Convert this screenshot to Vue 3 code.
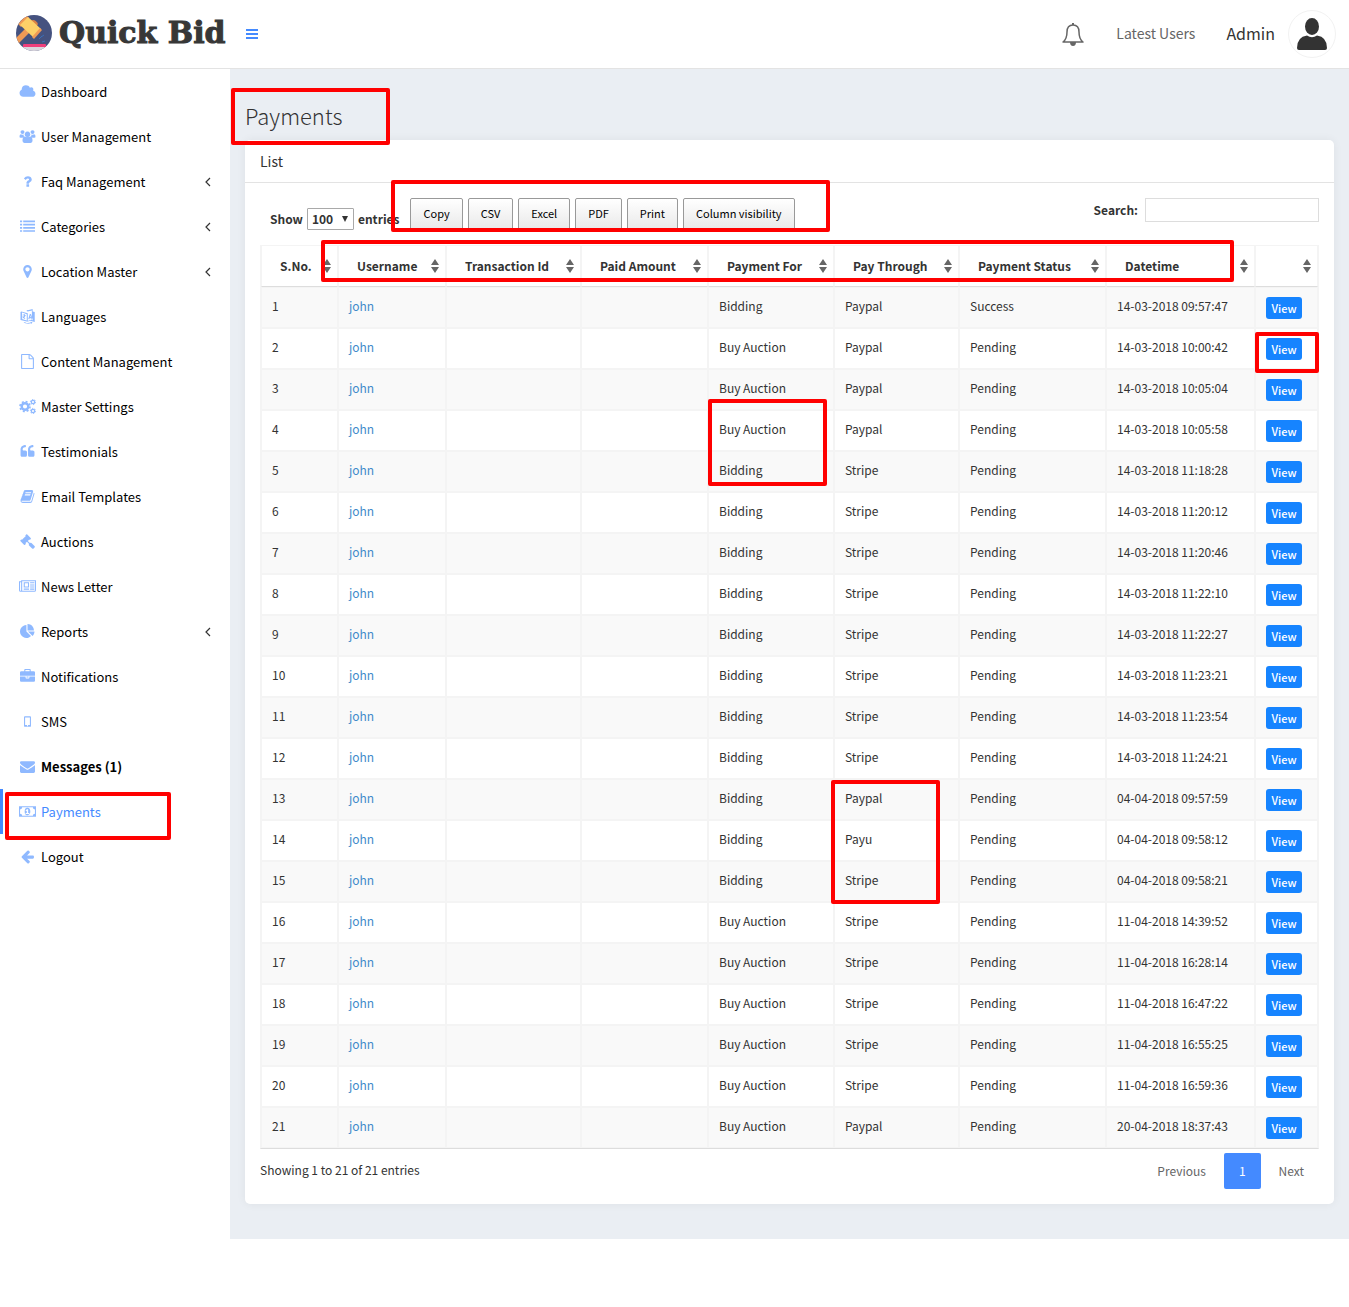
<script setup>
import { ref } from 'vue'

const menu = [
  { label: 'Dashboard', icon: 'cloud' },
  { label: 'User Management', icon: 'users' },
  { label: 'Faq Management', icon: 'question', sub: true },
  { label: 'Categories', icon: 'list', sub: true },
  { label: 'Location Master', icon: 'marker', sub: true },
  { label: 'Languages', icon: 'language' },
  { label: 'Content Management', icon: 'file' },
  { label: 'Master Settings', icon: 'cogs' },
  { label: 'Testimonials', icon: 'quote' },
  { label: 'Email Templates', icon: 'book' },
  { label: 'Auctions', icon: 'gavel' },
  { label: 'News Letter', icon: 'news' },
  { label: 'Reports', icon: 'pie', sub: true },
  { label: 'Notifications', icon: 'briefcase' },
  { label: 'SMS', icon: 'mobile' },
  { label: 'Messages (1)', icon: 'envelope', bold: true },
  { label: 'Payments', icon: 'money', active: true },
  { label: 'Logout', icon: 'arrow' },
]

const wide = ['cloud', 'users', 'cogs', 'news', 'money']

const icons = {
  cloud: 'M1984 1152q0 159-112.500 271.500t-271.500 112.500h-1088q-185 0-316.500-131.500t-131.500-316.500q0-132 71-241.500t187-163.500q-2-28-2-43 0-212 150-362t362-150q158 0 286.500 88t187.500 230q70-62 166-62 106 0 181 75t75 181q0 75-41 138 129 30 213 134.500t84 239.500z',
  question: 'M1088 1256v240q0 16-12 28t-28 12h-240q-16 0-28-12t-12-28v-240q0-16 12-28t28-12h240q16 0 28 12t12 28zm316-600q0 54-15.500 101t-35 76.500-55 59.500-57.500 43.500-61 35.500q-41 23-68.500 65t-27.500 67q0 17-12 32.500t-28 15.500h-240q-15 0-25.500-18.500t-10.500-37.500v-45q0-83 65-156.500t143-108.500q59-27 84-56t25-76q0-42-46.500-74t-107.500-32q-65 0-108 29-35 25-107 115-13 16-31 16-12 0-25-8l-164-125q-13-10-15.500-25t5.500-28q160-266 464-266 80 0 161 31t146 83 106 127.500 41 158.500z',
  list: 'M0 192h256v192H0zM384 192h1408v192H384zM0 576h256v192H0zM384 576h1408v192H384zM0 960h256v192H0zM384 960h1408v192H384zM0 1344h256v192H0zM384 1344h1408v192H384z',
  marker: 'M1152 640q0-106-75-181t-181-75-181 75-75 181 75 181 181 75 181-75 75-181zm256 0q0 109-33 179l-364 774q-16 33-47.500 52t-67.500 19-67.500-19-46.500-52l-365-774q-33-70-33-179 0-212 150-362t362-150 362 150 150 362z',
  file: 'M1596 380q28 28 48 76t20 88v1152q0 40-28 68t-68 28h-1344q-40 0-68-28t-28-68v-1600q0-40 28-68t68-28h896q40 0 88 20t76 48zm-444-244v376h376q-10-29-22-41l-313-313q-12-12-41-22zm384 1528v-1024h-416q-40 0-68-28t-28-68v-416h-768v1536h1280z',
  quote: 'M832 960v384q0 80-56 136t-136 56h-384q-80 0-136-56t-56-136v-704q0-104 40.500-198.500t109.500-163.500 163.500-109.500 198.500-40.500h64q26 0 45 19t19 45v128q0 26-19 45t-45 19h-64q-106 0-181 75t-75 181v32q0 40 28 68t68 28h224q80 0 136 56t56 136zm896 0v384q0 80-56 136t-136 56h-384q-80 0-136-56t-56-136v-704q0-104 40.500-198.500t109.500-163.500 163.500-109.500 198.500-40.500h64q26 0 45 19t19 45v128q0 26-19 45t-45 19h-64q-106 0-181 75t-75 181v32q0 40 28 68t68 28h224q80 0 136 56t56 136z',
  book: 'M1703 478q40 57 18 129l-275 906q-19 64-76.500 107.500t-122.500 43.500h-923q-77 0-148.500-53.500t-99.500-131.500q-24-67-2-127 0-4 3-27t4-37q1-8-3-21.500t-3-19.500q2-11 8-21t16.500-23.500 16.500-23.500q23-38 45-91.500t30-91.500q3-10 .5-30t-.5-28q3-11 17-28t17-23q21-36 42-92t25-90q1-9-2.500-32t.5-28q4-13 22-30.500t22-22.500q19-26 42.500-84.500t27.500-96.500q1-8-3-25.500t-2-26.500q2-8 9-18t18-23 17-21q8-12 16.500-30.500t15-35 16-36 19.500-32 26.500-23.500 36-11.500 47.500 5.500l-1 3q38-9 51-9h761q74 0 114 56t18 130l-274 906q-36 119-71.500 153.500t-128.500 34.500h-869q-27 0-38 15-11 16-1 43 24 70 144 70h923q29 0 56-15.500t35-41.500l300-987q7-22 5-57 38 15 59 43zm-1064 2q-4 13 2 22.500t20 9.500h608q13 0 25.500-9.500t16.500-22.500l21-64q4-13-2-22.500t-20-9.500h-608q-13 0-25.500 9.500t-16.500 22.500zm-83 256q-4 13 2 22.500t20 9.500h608q13 0 25.500-9.500t16.500-22.500l21-64q4-13-2-22.500t-20-9.500h-608q-13 0-25.500 9.500t-16.500 22.500z',
  gavel: 'M1771 1536q0 53-37 90l-107 108q-39 37-91 37-53 0-90-37l-363-364q-38-36-38-90 0-53 43-96l-256-256-126 126q-14 14-34 14t-34-14q2 2 12.500 12t12.500 13 10 11.500 10 13.500 6 13.500 5.500 16.500 1.500 18q0 38-28 68-3 3-16.500 18t-19 20.500-18.500 16.500-22 15.500-22 9-26 4.500q-40 0-68-28l-408-408q-28-28-28-68 0-13 4.500-26t9-22 15.500-22 16.500-18.500 20.500-19 18-16.500q30-28 68-28 10 0 18 1.500t16.500 5.500 13.500 6 13.500 10 11.500 10 13 12.500 12 12.500q-14-14-14-34t14-34l348-348q14-14 34-14t34 14q-2-2-12.500-12t-12.500-13-10-11.500-10-13.500-6-13.500-5.500-16.500-1.500-18q0-38 28-68 3-3 16.500-18t19-20.500 18.500-16.500 22-15.500 22-9 26-4.500q40 0 68 28l408 408q28 28 28 68 0 13-4.500 26t-9 22-15.500 22-16.500 18.500-20.500 19-18 16.500q-30 28-68 28-10 0-18-1.500t-16.500-5.500-13.500-6-13.500-10-11.500-10-13-12.500-12-12.500q14 14 14 34t-14 34l-126 126 256 256q43-43 96-43 52 0 91 37l363 363q37 39 37 91z',
  pie: 'M768 890l546 546q-106 108-247.500 168t-298.500 60q-209 0-385.500-103t-279.500-279.500-103-385.500 103-385.500 279.500-279.500 385.500-103v762zm187 6h773q0 157-60 298.500t-168 247.500zm709-128h-768v-768q209 0 385.500 103t279.500 279.500 103 385.500z',
  briefcase: 'M640 256h512v-128h-512v128zm1152 640v480q0 66-47 113t-113 47h-1472q-66 0-113-47t-47-113v-480h672v160q0 26 19 45t45 19h320q26 0 45-19t19-45v-160h672zm-768 0v128h-256v-128h256zm768-480v384h-1792v-384q0-66 47-113t113-47h352v-160q0-40 28-68t68-28h576q40 0 68 28t28 68v160h352q66 0 113 47t47 113z',
  envelope: 'M1792 710v794q0 66-47 113t-113 47h-1472q-66 0-113-47t-47-113v-794q44 49 101 87 362 246 497 345 57 42 92.500 65.500t94.500 48 110 24.500h2q51 0 110-24.500t94.500-48 92.500-65.500q170-123 498-345 57-39 100-87zm0-294q0 79-49 151t-122 123q-376 261-468 325-10 7-42.500 31t-54 38.500-52 32.500-57.500 27-50 9h-2q-23 0-50-9t-57.500-27-52-32.500-54-38.500-42.500-31q-91-64-262-182.500t-205-142.500q-62-42-117-115.500t-55-136.500q0-78 41.500-130t118.500-52h1472q65 0 112.500 47t47.500 113z',
  arrow: 'M1664 896v128q0 53-32.500 90.500t-84.500 37.500h-704l293 294q38 36 38 90t-38 90l-75 76q-37 37-90 37-52 0-91-37l-651-652q-37-37-37-90 0-52 37-91l651-650q38-38 91-38 52 0 90 38l75 74q38 38 38 91t-38 91l-293 293h704q52 0 84.500 37.500t32.500 90.500z',
  mobile: 'M590 256h612q108 0 108 108v1064q0 108-108 108h-612q-108 0-108-108v-1064q0-108 108-108zm20 150v900h572v-900zm286 920a66 66 0 1 0 1 0z',
  users: 'M420 130a235 235 0 1 0 1 0zM1628 130a235 235 0 1 0 1 0zM1024 300a340 340 0 1 0 1 0zM60 960q-10-340 150-340 120 90 340 30-10 190 90 290-130 10-200 100h-230q-150 0-150-80zM1988 960q10-340-150-340-120 90-340 30 10 190-90 290 130 10 200 100h230q150 0 150-80zM700 900q320 200 650 0 280 0 280 520 0 250-230 250h-750q-230 0-230-250 0-520 280-520z',
  news: 'M1080 512H700v380h380zM1210 1150v130H570v-130zM1210 384v640H570V384zM1850 1150v130h-512v-130zM1850 896v130h-512V896zM1850 640v130h-512V640zM1850 384v130h-512V384zM256 1344V384H128v960a64 64 0 0 0 128 0zM1920 1344V256H384v1088q0 33-11 64h1483q64 0 64-64zM2048 128v1216q0 192-192 192H192Q0 1536 0 1344V256h256V128z',
  money: 'M0 256h2048v1280H0zM384 384q0 256-256 256v512q256 0 256 256h1280q0-256 256-256V640q-256 0-256-256zM1024 450q340 40 340 446t-340 446-340-446 340-446zM950 620l-160 150 70 90 80-60v290h-140v110h430v-110h-130V620z',
  language: 'M150 290l780 220v1010L60 1320V370zM240 430v760l570 170V630zM850 130l90 30 570-150v280l250 70v1180l-540-150-250 100v-90l450-160V180L930 290 780 240zM1180 560l-190 620 130 40 40-150 190 60 50 170 130 40-210-720zM1250 760l70 240-110-30zM330 640l160 40v-80l100 30v80l110 30v80l-60-10q-40 150-130 210l130 110-70 60-150-120-90 60-50-90 80-50q-60-90-70-170l90 20q10 50 50 90 50-60 60-140l-160-40zM420 1600l190-40 70 80q300 60 600-30l-30-90 240 60-120 210-50-80q-380 90-670-10z',
}

const headers = ['S.No.', 'Username', 'Transaction Id', 'Paid Amount', 'Payment For', 'Pay Through', 'Payment Status', 'Datetime', '']

const rows = [
  ['Bidding', 'Paypal', 'Success', '14-03-2018 09:57:47'],
  ['Buy Auction', 'Paypal', 'Pending', '14-03-2018 10:00:42'],
  ['Buy Auction', 'Paypal', 'Pending', '14-03-2018 10:05:04'],
  ['Buy Auction', 'Paypal', 'Pending', '14-03-2018 10:05:58'],
  ['Bidding', 'Stripe', 'Pending', '14-03-2018 11:18:28'],
  ['Bidding', 'Stripe', 'Pending', '14-03-2018 11:20:12'],
  ['Bidding', 'Stripe', 'Pending', '14-03-2018 11:20:46'],
  ['Bidding', 'Stripe', 'Pending', '14-03-2018 11:22:10'],
  ['Bidding', 'Stripe', 'Pending', '14-03-2018 11:22:27'],
  ['Bidding', 'Stripe', 'Pending', '14-03-2018 11:23:21'],
  ['Bidding', 'Stripe', 'Pending', '14-03-2018 11:23:54'],
  ['Bidding', 'Stripe', 'Pending', '14-03-2018 11:24:21'],
  ['Bidding', 'Paypal', 'Pending', '04-04-2018 09:57:59'],
  ['Bidding', 'Payu', 'Pending', '04-04-2018 09:58:12'],
  ['Bidding', 'Stripe', 'Pending', '04-04-2018 09:58:21'],
  ['Buy Auction', 'Stripe', 'Pending', '11-04-2018 14:39:52'],
  ['Buy Auction', 'Stripe', 'Pending', '11-04-2018 16:28:14'],
  ['Buy Auction', 'Stripe', 'Pending', '11-04-2018 16:47:22'],
  ['Buy Auction', 'Stripe', 'Pending', '11-04-2018 16:55:25'],
  ['Buy Auction', 'Stripe', 'Pending', '11-04-2018 16:59:36'],
  ['Buy Auction', 'Paypal', 'Pending', '20-04-2018 18:37:43'],
]

const exportButtons = ['Copy', 'CSV', 'Excel', 'PDF', 'Print', 'Column visibility']
const pageSize = ref('100')
const search = ref('')
</script>

<template>
  <div class="app">
    <header class="topbar">
      <a href="#" class="brand">
        <svg class="brand-logo" viewBox="0 0 36 36" aria-hidden="true">
          <defs><clipPath id="disc"><circle cx="18" cy="18" r="18" /></clipPath></defs>
          <g clip-path="url(#disc)">
            <rect width="36" height="36" fill="#45527f" />
            <path d="M-2 25L10 13l4 4L0 31z" fill="#f09a55" />
            <path d="M14 6q5-3 8 3l-3 5z" fill="#d98246" />
            <path d="M2 9L10 0l3 3-8 9z" fill="#f09a55" />
            <path d="M4 10L12 2l13 12-8 8z" fill="#fdd068" />
            <path d="M16 22l8-9 2 2-8 9z" fill="#f09a55" />
            <path d="M23 24l3-3M26 27l3-1M25 22l3-2" stroke="#3c6fb5" stroke-width="1" />
            <rect x="7" y="29" width="23" height="4" rx="1" fill="#ef3f7c" />
            <rect x="5" y="32" width="27" height="4" fill="#d9d5dc" />
          </g>
        </svg>
        <span class="brand-name">Quick Bid</span>
      </a>
      <button class="toggle" type="button" aria-label="Toggle menu"><i></i><i></i><i></i></button>
      <nav class="top-links">
        <a href="#" class="bell" aria-label="Notifications">
          <svg viewBox="0 0 24 26" width="24" height="26" fill="none" stroke="#666" stroke-width="1.500">
            <path d="M2 21q4-3 4-10 0-7 6-7t6 7q0 7 4 10z" stroke-linejoin="round" />
            <path d="M12 2v2" stroke-width="2" />
            <path d="M9 21h6q0 4-3 4t-3-4z" fill="#666" stroke="none" />
          </svg>
        </a>
        <a href="#" class="latest">Latest Users</a>
        <a href="#" class="admin">Admin</a>
        <a href="#" class="avatar" aria-label="Profile">
          <svg viewBox="0 0 46 46" width="46" height="46" fill="#333">
            <ellipse cx="23" cy="15.500" rx="7" ry="8.500" />
            <path d="M8 37q0-11 10-12.500q5 3.500 10 0q10 1.500 10 12.500 0 2-2 2H10q-2 0-2-2z" />
          </svg>
        </a>
      </nav>
    </header>

    <div class="body">
      <aside class="sidebar">
        <a v-for="item in menu" :key="item.label" href="#" class="item" :class="{ active: item.active, bold: item.bold }">
          <span class="icon">
            <svg v-if="item.icon === 'cogs'" viewBox="0 0 17 15" width="17" height="15" fill="none">
              <circle cx="6" cy="7.500" r="3.300" stroke="currentColor" stroke-width="2.400" />
              <circle cx="6" cy="7.500" r="5" stroke="currentColor" stroke-width="1.600" stroke-dasharray="2 1.930" />
              <circle cx="14" cy="3" r="1.700" stroke="currentColor" stroke-width="1.300" />
              <circle cx="14" cy="3" r="2.600" stroke="currentColor" stroke-width="1" stroke-dasharray="1.300 1.420" />
              <circle cx="14" cy="12" r="1.700" stroke="currentColor" stroke-width="1.300" />
              <circle cx="14" cy="12" r="2.600" stroke="currentColor" stroke-width="1" stroke-dasharray="1.300 1.420" />
            </svg>
            <svg v-else :viewBox="wide.includes(item.icon) ? '0 0 2048 1792' : '0 0 1792 1792'" :width="wide.includes(item.icon) ? 17 : 15" height="15" fill="currentColor" fill-rule="evenodd">
              <path :d="icons[item.icon]" />
            </svg>
          </span>
          <span class="label">{{ item.label }}</span>
          <svg v-if="item.sub" class="chevron" viewBox="0 0 6 10" width="6" height="10" fill="none" stroke="#333" stroke-width="1.200"><path d="M5 1L1 5l4 4" /></svg>
          <span v-if="item.active" class="mark mark-menu"></span>
        </a>
      </aside>

      <main class="content">
        <h1 class="title">Payments<span class="mark mark-title"></span></h1>
        <section class="panel">
          <h2 class="panel-head">List</h2>
          <div class="panel-body">
            <div class="toolbar">
              <label class="length">
                Show
                <span class="select-wrap">
                  <select v-model="pageSize"><option>10</option><option>25</option><option>50</option><option>100</option></select>
                  <svg viewBox="0 0 6 6" width="6" height="6" aria-hidden="true"><path d="M0 0h6L3 6z" fill="#333" /></svg>
                </span>
                entries
              </label>
              <div class="exports">
                <button v-for="b in exportButtons" :key="b" type="button">{{ b }}</button>
                <span class="mark mark-exports"></span>
              </div>
              <label class="search">Search: <input v-model="search" type="text" /></label>
            </div>

            <div class="table-wrap">
              <table>
                <colgroup>
                  <col class="c1" /><col class="c2" /><col class="c3" /><col class="c4" /><col class="c5" /><col class="c6" /><col class="c7" /><col class="c8" /><col class="c9" />
                </colgroup>
                <thead>
                  <tr>
                    <th v-for="(h, i) in headers" :key="i" scope="col">
                      <div class="th">
                        <span>{{ h }}</span>
                        <svg viewBox="0 0 8 14" width="8" height="14" aria-hidden="true"><path d="M0 6l4-6 4 6zM0 8h8l-4 6z" fill="#666" /></svg>
                      </div>
                    </th>
                  </tr>
                </thead>
                <tbody>
                  <tr v-for="(r, i) in rows" :key="i">
                    <td>{{ i + 1 }}</td>
                    <td><a href="#" class="user">john</a></td>
                    <td></td>
                    <td></td>
                    <td>{{ r[0] }}<span v-if="i === 3" class="mark mark-for"></span></td>
                    <td>{{ r[1] }}<span v-if="i === 12" class="mark mark-through"></span></td>
                    <td>{{ r[2] }}</td>
                    <td>{{ r[3] }}</td>
                    <td class="action"><button type="button" class="view">View</button><span v-if="i === 1" class="mark mark-view"></span></td>
                  </tr>
                </tbody>
              </table>
              <span class="mark mark-head"></span>
            </div>

            <div class="foot">
              <span class="info">Showing 1 to 21 of 21 entries</span>
              <nav class="pages">
                <a href="#">Previous</a>
                <a href="#" class="current">1</a>
                <a href="#">Next</a>
              </nav>
            </div>
          </div>
        </section>
      </main>
    </div>
  </div>
</template>

<style>
body {
  margin: 0;
  background: #fff;
}
</style>

<style scoped>
.app {
  font-family: "Noto Sans CJK SC", "Noto Sans", sans-serif;
  font-size: 12px;
  line-height: 20px;
  color: #333;
}
.app *,
.app *::before {
  box-sizing: border-box;
}
a {
  color: inherit;
  text-decoration: none;
}
button,
input,
select {
  font: inherit;
  color: inherit;
}
svg {
  display: block;
  flex: none;
}

.mark {
  position: absolute;
  border: 4px solid #f00;
  border-radius: 2px;
  pointer-events: none;
  z-index: 2;
}
.mark-menu { left: 2px; top: 3px; width: 166px; height: 48px; }
.mark-title { left: -14px; top: -12px; width: 159px; height: 57px; }
.mark-exports { left: -19px; top: -18px; right: -35px; height: 52px; }
.mark-head { left: 61px; right: 85px; top: -5px; height: 42px; }
.mark-for { left: -1px; top: -12px; width: 119px; height: 87px; }
.mark-through { left: -4px; top: 0; width: 109px; height: 124px; }
.mark-view { left: -1px; top: 3px; width: 64px; height: 41px; }

/* Top bar */
.topbar {
  display: flex;
  align-items: center;
  height: 69px;
  padding: 0 13px 0 16px;
  border-bottom: 1px solid #e3e3e3;
}
.brand {
  display: flex;
  align-items: center;
  gap: 7px;
  padding-bottom: 2px;
}
.brand-logo {
  width: 36px;
  height: 36px;
}
.brand-name {
  font-family: "DejaVu Serif", serif;
  font-weight: 700;
  font-size: 30px;
  line-height: 36px;
  color: #373737;
  -webkit-text-stroke: 1px #373737;
  white-space: nowrap;
}
.toggle {
  display: flex;
  flex-direction: column;
  gap: 2px;
  width: 12px;
  margin-left: 20px;
  padding: 0;
  border: 0;
  background: none;
}
.toggle i {
  height: 2px;
  background: #448aff;
}
.top-links {
  display: flex;
  align-items: center;
  margin-left: auto;
}
.latest {
  margin-left: 31px;
  padding-bottom: 2px;
  font-size: 14px;
  color: #666;
}
.admin {
  margin-left: 31px;
  padding-bottom: 2px;
  font-size: 16px;
}
.avatar {
  margin-left: 13px;
  border: 1px solid #f2f2f2;
  border-radius: 50%;
}

/* Layout */
.body {
  display: flex;
}
.sidebar {
  flex: none;
  width: 230px;
}
.content {
  flex: 1;
  min-width: 0;
  padding: 31px 15px 35px;
  background: #eaeef3;
}

.item {
  position: relative;
  display: flex;
  align-items: center;
  gap: 3px;
  height: 45px;
  padding: 0 19px 0 14px;
  border-left: 3px solid transparent;
  font-size: 13px;
  color: #000;
}
.item.active {
  border-left-color: #448aff;
  color: #448aff;
}
.item.bold {
  font-weight: 700;
}
.icon {
  display: flex;
  justify-content: center;
  width: 21px;
  color: #8fb9ff;
}
.chevron {
  margin-left: auto;
}

.title {
  position: relative;
  margin: 0;
  height: 40px;
  font-weight: 300;
  font-size: 22px;
  line-height: 30px;
}
.panel {
  background: #fff;
  border-radius: 5px;
  box-shadow: 0 0 10px rgba(0, 0, 0, 0.06);
}
.panel-head {
  margin: 0;
  height: 43px;
  padding: 0 15px;
  border-bottom: 1px solid #e3e3e3;
  font-weight: 400;
  font-size: 14px;
  line-height: 42px;
}
.panel-body {
  padding: 15px;
}

.toolbar {
  display: flex;
  align-items: flex-start;
  height: 47px;
}
.length {
  display: flex;
  align-items: center;
  gap: 4px;
  margin: 10px 0 0 10px;
  font-weight: 700;
}
.select-wrap {
  position: relative;
}
.select-wrap svg {
  position: absolute;
  right: 6px;
  top: 8px;
}
.length select {
  display: block;
  width: 47px;
  height: 22px;
  padding: 0 4px;
  border: 1px solid #a9a9a9;
  border-radius: 1px;
  background: #fff;
  appearance: none;
  line-height: 20px;
}
.exports {
  position: relative;
  display: flex;
  gap: 5px;
  margin-left: 11px;
}
.exports button {
  height: 32px;
  padding: 0 12px 2px;
  border: 1px solid #999;
  border-radius: 2px;
  background: linear-gradient(#fff, #e9e9e9);
  font-size: 11px;
  color: #000;
}
.search {
  display: flex;
  align-items: center;
  gap: 7px;
  margin-left: auto;
  font-weight: 700;
}
.search input {
  width: 174px;
  height: 24px;
  padding: 0 5px;
  border: 1px solid #ddd;
  font-weight: 400;
}

/* Table */
.table-wrap {
  position: relative;
}
table {
  width: 100%;
  table-layout: fixed;
  border-collapse: separate;
  border-spacing: 0;
  border: 1px solid #f4f4f4;
  border-bottom-color: #ddd;
}
.c1 { width: 77px; }
.c2 { width: 108px; }
.c3 { width: 135px; }
.c4 { width: 127px; }
.c5 { width: 126px; }
.c6 { width: 125px; }
.c7 { width: 147px; }
.c8 { width: 149px; }
.c9 { width: 63px; }
th,
td {
  position: relative;
  height: 41px;
  padding: 0 10px 4px;
  border: 1px solid #f4f4f4;
  text-align: left;
  white-space: nowrap;
}
th {
  padding: 0 6px 0 18px;
  border-top: 0;
  border-bottom-color: #ddd;
}
td.action {
  padding-bottom: 0;
}
tbody tr:nth-child(odd) td {
  background: #f9f9f9;
}
.th {
  display: flex;
  align-items: center;
  justify-content: space-between;
}
.user {
  color: #428bca;
}
.view {
  display: block;
  width: 36px;
  height: 22px;
  padding: 0;
  border: 0;
  border-radius: 3px;
  background: #1684ff;
  font-weight: 500;
  font-size: 11px;
  color: #fff;
}

.foot {
  display: flex;
  justify-content: space-between;
  padding-top: 4px;
}
.info {
  line-height: 34px;
}
.pages {
  display: flex;
  gap: 3px;
  color: #666;
}
.pages a {
  padding: 0 15px;
  line-height: 36px;
}
.pages .current {
  border-radius: 2px;
  background: #448aff;
  color: #fff;
}
</style>
